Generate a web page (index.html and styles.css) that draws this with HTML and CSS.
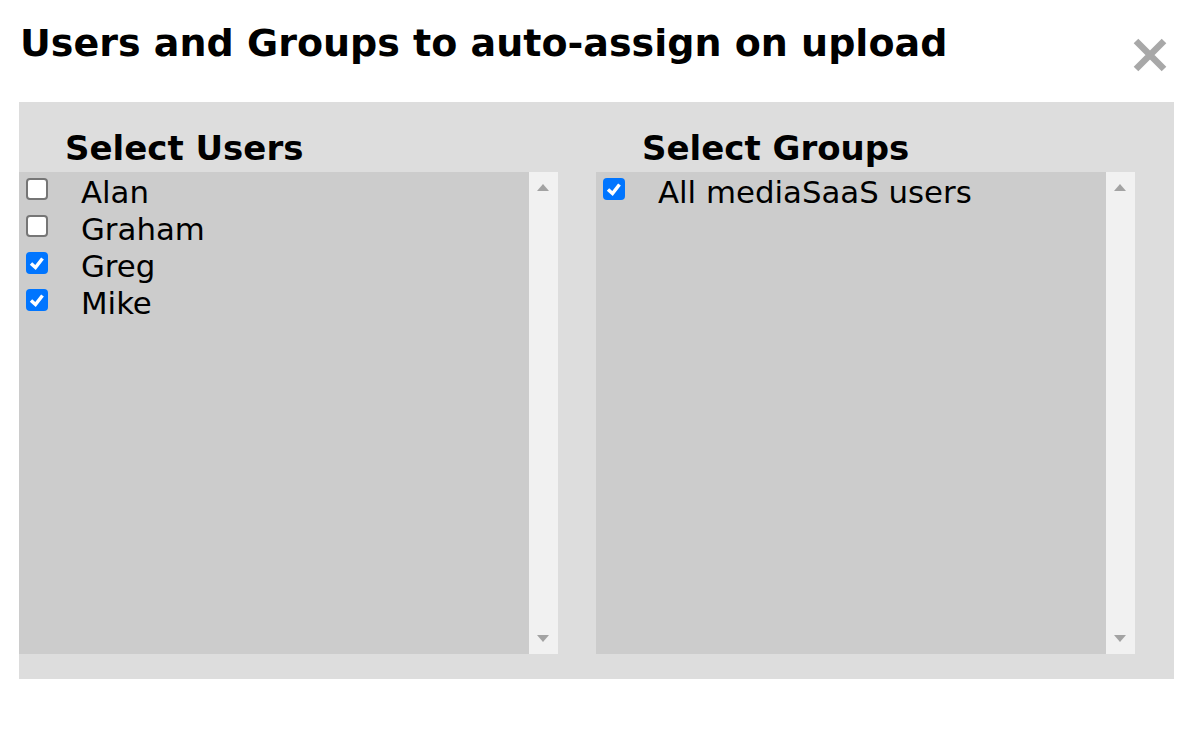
FILE: index.html
```html
<!DOCTYPE html>
<html>
<head>
<meta charset="utf-8">
<link rel="stylesheet" href="styles.css">
</head>
<body>
<div class="dialog">
  <div class="header">
    <h1 class="title">Users and Groups to auto-assign on upload</h1>
    <span class="close" aria-label="close">
      <svg width="34" height="34" viewBox="0 0 34 34"><path d="M3 3 L31 31 M31 3 L3 31" stroke="#a8a8a8" stroke-width="6.5" fill="none"/></svg>
    </span>
  </div>
  <div class="panel">
    <div class="column">
      <h2 class="heading">Select Users</h2>
      <div class="list">
        <div class="items">
          <label class="row"><span class="box"></span><span class="label">Alan</span></label>
          <label class="row"><span class="box"></span><span class="label">Graham</span></label>
          <label class="row"><span class="box checked"><svg width="22" height="22" viewBox="0 0 22 22"><path d="M5 11.5 L9.5 15.5 L16.5 6.5" stroke="#fff" stroke-width="3.5" fill="none"/></svg></span><span class="label">Greg</span></label>
          <label class="row"><span class="box checked"><svg width="22" height="22" viewBox="0 0 22 22"><path d="M5 11.5 L9.5 15.5 L16.5 6.5" stroke="#fff" stroke-width="3.5" fill="none"/></svg></span><span class="label">Mike</span></label>
        </div>
        <div class="scrollbar">
          <span class="arrow up"></span>
          <span class="arrow down"></span>
        </div>
      </div>
    </div>
    <div class="column">
      <h2 class="heading">Select Groups</h2>
      <div class="list">
        <div class="items">
          <label class="row"><span class="box checked"><svg width="22" height="22" viewBox="0 0 22 22"><path d="M5 11.5 L9.5 15.5 L16.5 6.5" stroke="#fff" stroke-width="3.5" fill="none"/></svg></span><span class="label">All mediaSaaS users</span></label>
        </div>
        <div class="scrollbar">
          <span class="arrow up"></span>
          <span class="arrow down"></span>
        </div>
      </div>
    </div>
  </div>
</div>
</body>
</html>
```
FILE: styles.css
```css
* { box-sizing: border-box; }
html, body { margin: 0; padding: 0; background: #fff; }
body {
  font-family: "DejaVu Sans", Verdana, sans-serif;
  color: #000;
}
.dialog {
  padding: 0 16px 0 19px;
}
.header {
  display: flex;
  justify-content: space-between;
  align-items: flex-start;
  height: 102px;
}
.title {
  margin: 0;
  padding: 20px 0 0 1px;
  font-size: 38px;
  line-height: 46px;
  font-weight: bold;
}
.close {
  display: block;
  margin-top: 38px;
  margin-right: 7px;
  width: 34px;
  height: 34px;
}
.close svg { display: block; }
.panel {
  background: #dddddd;
  display: grid;
  grid-template-columns: 539px 539px;
  column-gap: 38px;
  padding: 0 39px 25px 0;
}
.heading {
  margin: 0 0 3px 0;
  padding: 26px 0 0 46px;
  font-size: 34px;
  line-height: 41px;
  font-weight: bold;
}
.list {
  display: flex;
  height: 482px;
  background: #cccccc;
}
.items {
  flex: 1;
  padding-top: 2px;
}
.row {
  display: flex;
  align-items: flex-start;
  height: 37px;
  padding-left: 7px;
}
.box {
  width: 22px;
  height: 22px;
  margin-top: 4px;
  border: 2px solid #767676;
  border-radius: 4px;
  background: #fff;
  flex: none;
}
.box.checked {
  border: none;
  background: #0075ff;
}
.box svg { display: block; }
.label {
  margin-left: 33px;
  font-size: 30.8px;
  line-height: 37px;
}
.scrollbar {
  width: 29px;
  background: #f1f1f1;
  position: relative;
  flex: none;
}
.arrow {
  position: absolute;
  left: 8px;
  width: 0;
  height: 0;
  border-left: 6.5px solid transparent;
  border-right: 6.5px solid transparent;
}
.arrow.up {
  top: 12px;
  border-bottom: 7px solid #a3a3a3;
}
.arrow.down {
  bottom: 12px;
  border-top: 7px solid #a3a3a3;
}
```
